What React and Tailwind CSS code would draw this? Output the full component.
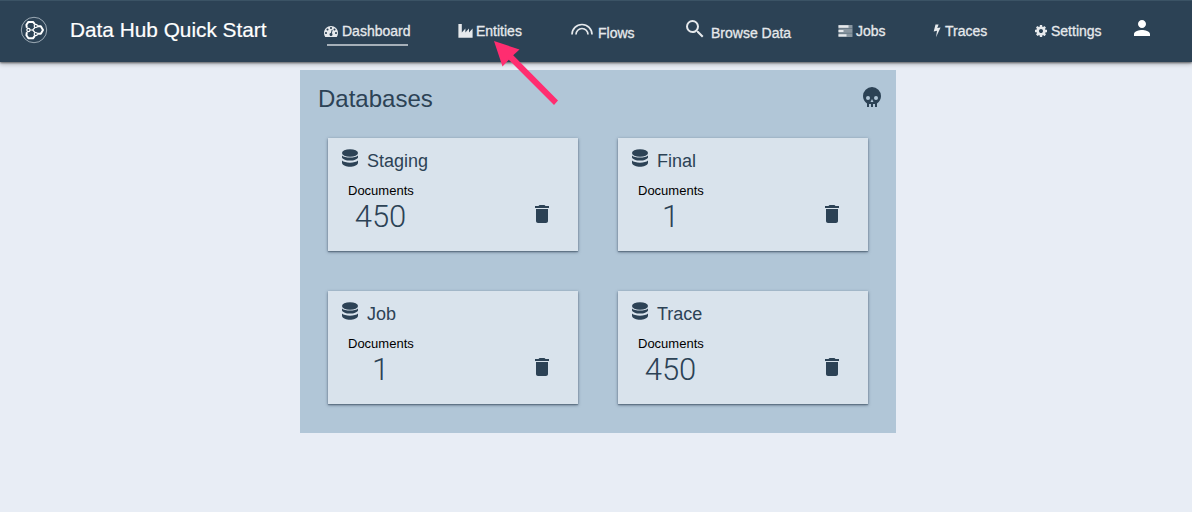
import React from "react";
import { MdDelete, MdPerson, MdSearch } from "react-icons/md";

function Logo() {
  return (
    <svg className="h-[28px] w-[28px]" viewBox="0 0 28 28" fill="none" stroke="#fff">
      <circle cx="14" cy="14" r="12.7" strokeWidth="0.8" stroke="#b9c4cd" />
      <g strokeWidth="2" strokeLinejoin="round">
        <path d="M6.9 11.8 L6.4 8.8 L8.4 5.9 H13 L14.8 8.2" />
        <path d="M6.9 16.2 L6.4 19.2 L8.4 22.3 H13 L14.8 19.8" />
        <path d="M17.6 10.3 H20.8 L23 14 L20.8 17.8 H17.6" />
      </g>
      <g strokeWidth="1.2">
        <circle cx="8.4" cy="14" r="1.6" />
        <circle cx="15.8" cy="9.9" r="1.6" />
        <circle cx="15.8" cy="18.1" r="1.6" />
        <path d="M10 14 H12.7 L14.9 11.5 M12.7 14 L14.9 16.5" />
      </g>
    </svg>
  );
}

function GaugeIcon() {
  return (
    <svg className="h-[14px] w-[14px]" viewBox="0 0 1792 1792" fill="currentColor">
      <path d="M384 1152q0-53-37.5-90.5t-90.5-37.5-90.5 37.5-37.5 90.5 37.5 90.5 90.5 37.5 90.5-37.5 37.5-90.5zm192-448q0-53-37.5-90.5t-90.5-37.5-90.5 37.5-37.5 90.5 37.5 90.5 90.5 37.5 90.5-37.5 37.5-90.5zm428 481l101-382q6-26-7.5-48.5t-38.5-29.5-48 6.5-30 39.5l-101 382q-60 5-107 43.5t-63 98.5q-20 77 20 146t117 89 146-20 89-117q16-60-6-117t-72-91zm660-33q0-53-37.5-90.5t-90.5-37.5-90.5 37.5-37.5 90.5 37.5 90.5 90.5 37.5 90.5-37.5 37.5-90.5zm-640-640q0-53-37.5-90.5t-90.5-37.5-90.5 37.5-37.5 90.5 37.5 90.5 90.5 37.5 90.5-37.5 37.5-90.5zm448 192q0-53-37.5-90.5t-90.5-37.5-90.5 37.5-37.5 90.5 37.5 90.5 90.5 37.5 90.5-37.5 37.5-90.5zm320 448q0 261-141 483-19 29-54 29h-1402q-35 0-54-29-141-221-141-483 0-182 71-348t191-286 286-191 348-71 348 71 286 191 191 286 71 348z" />
    </svg>
  );
}

function IndustryIcon() {
  return (
    <svg className="h-[14px] w-[15px]" viewBox="0 0 15 14" fill="currentColor">
      <path d="M0.4 0 H3.8 V8.4 L7.4 4.5 V8.4 L11 4.5 V8.4 L14.6 4.5 V13.8 H0.4 Z" />
    </svg>
  );
}

function ArcsIcon() {
  return (
    <svg className="h-[12px] w-[22px]" viewBox="0 0 22 12" fill="none" stroke="currentColor" strokeWidth="1.7">
      <path d="M1 11.5 A10 10 0 0 1 21 11.5" />
      <path d="M5 11.5 A6 6 0 0 1 17 11.5" />
    </svg>
  );
}

function TasksIcon() {
  return (
    <svg className="h-[12px] w-[15px]" viewBox="0 0 15 12" fill="currentColor">
      <rect x="0.5" y="0" width="14" height="12" rx="0.5" opacity="0.5" />
      <path d="M0.5 0.3h10v2.4h-10z M0.5 4.9h5v2.2h-5z M0.5 9.2h8v2.4h-8z" />
      <path d="M0.5 3.1h14v1h-14z M0.5 7.7h14v1h-14z" fill="#2c4255" opacity="0.3" />
    </svg>
  );
}

function BoltIcon() {
  return (
    <svg className="h-[14px] w-[8px]" viewBox="0 0 8 14" fill="currentColor">
      <path d="M2.5 0.5 H5.6 L4.3 4.1 L7.6 3.4 L3 13.2 L4 6.8 L0.7 7.6 Z" />
    </svg>
  );
}

function CogIcon() {
  return (
    <svg className="h-[14px] w-[14px]" viewBox="0 0 1792 1792" fill="currentColor">
      <path d="M1152 896q0-106-75-181t-181-75-181 75-75 181 75 181 181 75 181-75 75-181zm512-109v222q0 12-8 23t-20 13l-185 28q-19 54-39 91 35 50 107 138 10 12 10 25t-9 23q-27 37-99 108t-94 71q-12 0-26-9l-138-108q-44 23-91 38-16 136-29 186-7 28-36 28h-222q-14 0-24.500-8.500t-11.500-21.500l-28-184q-49-16-90-37l-141 107q-10 9-25 9-14 0-25-11-126-114-165-168-7-10-7-23 0-12 8-23 15-21 51-66.500t54-70.500q-27-50-41-99l-183-27q-13-2-21-12.500t-8-23.500v-222q0-12 8-23t19-13l186-28q14-46 39-92-40-57-107-138-10-12-10-24 0-10 9-23 26-36 98.500-107.500t94.500-71.500q13 0 26 10l138 107q44-23 91-38 16-136 29-186 7-28 36-28h222q14 0 24.500 8.500t11.500 21.500l28 184q49 16 90 37l142-107q9-9 24-9 13 0 25 10 129 119 165 170 7 8 7 22 0 12-8 23-15 21-51 66.500t-54 70.500q26 50 41 98l183 28q13 2 21 12.500t8 23.500z" />
    </svg>
  );
}

function DatabaseIcon() {
  return (
    <svg className="h-[18px] w-[16px]" viewBox="0 0 16 18" fill="currentColor">
      <ellipse cx="8" cy="4" rx="8" ry="3.8" />
      <path d="M0 6.4 C2.6 9.2 13.400 9.2 16 6.400 V8.500 C14.500 12.600 1.500 12.600 0 8.500 Z" />
      <path d="M0 11.600 C2.600 14.400 13.400 14.400 16 11.600 V13.900 C14.500 19 1.500 19 0 13.900 Z" />
    </svg>
  );
}

function SkullIcon() {
  return (
    <svg className="mt-px h-6 w-6" viewBox="0 0 24 24" fill="currentColor">
      <path d="M12,2A9,9 0 0,0 3,11C3,14.03 4.53,16.82 7,18.47V22H9V19H11V22H13V19H15V22H17V18.46C19.47,16.81 21,14 21,11A9,9 0 0,0 12,2M8,11A2,2 0 0,1 10,13A2,2 0 0,1 8,15A2,2 0 0,1 6,13A2,2 0 0,1 8,11M16,11A2,2 0 0,1 18,13A2,2 0 0,1 16,15A2,2 0 0,1 14,13A2,2 0 0,1 16,11M12,14L13.5,17H10.5L12,14Z" />
    </svg>
  );
}

function NavItem({ icon, label, className, gap = "gap-1", active = false }) {
  return (
    <a className={`flex flex-none items-start ${className}`}>
      <span className="flex flex-col">
        <span className={`flex items-center ${gap}`}>
          {icon}
          <span className="whitespace-nowrap pt-px leading-5 [-webkit-text-stroke:0.3px_#e6e9ec]">{label}</span>
        </span>
        {active && <span className="mt-[3px] mr-[3px] ml-[3px] h-[2px] bg-[#a6b0b9]" />}
      </span>
    </a>
  );
}

function DatabaseCard({ name, count }) {
  return (
    <section className="h-[113px] w-[250px] bg-[#d9e3ec] pt-[11px] shadow-[0_1px_3px_rgba(30,50,70,0.55),0_1px_1px_rgba(30,50,70,0.3)]">
      <div className="flex items-start gap-[9px] pl-[14px]">
        <DatabaseIcon />
        <h2 className="pt-[1px] text-[18px] leading-[22px]">{name}</h2>
      </div>
      <div className="flex pl-5">
        <div className="w-[65px] pt-[11px]">
          <div className="text-[13px] leading-4 text-black">Documents</div>
          <div className="pt-[1px] text-center font-[Roboto] text-[31px] leading-[34px] font-light">{count}</div>
        </div>
        <MdDelete className="mt-[30px] ml-[117px] h-6 w-6" />
      </div>
    </section>
  );
}

export default function App() {
  return (
    <div className="relative h-[512px] w-[1192px] overflow-hidden bg-[#e8edf5] font-['Liberation_Sans',sans-serif] text-[#2c4255]">
      <header className="flex h-[62px] items-start border-t border-[#3b5365] bg-[#2c4255] text-sm text-[#e6e9ec] shadow-[0_1px_2px_rgba(0,0,0,0.5),0_2px_5px_rgba(0,0,0,0.25)]">
        <div className="flex w-[324px] flex-none items-start pl-5">
          <div className="pt-[15px]">
            <Logo />
          </div>
          <h1 className="pt-[17px] pl-[22px] text-[20.8px] leading-6 whitespace-nowrap text-white [-webkit-text-stroke:0.2px_#fff]">Data Hub Quick Start</h1>
        </div>
        <nav className="flex">
          <NavItem icon={<GaugeIcon />} label="Dashboard" className="w-[134px] pt-[19px]" active />
          <NavItem icon={<IndustryIcon />} label="Entities" className="w-[113px] pt-[19px]" gap="gap-[3px]" />
          <NavItem icon={<ArcsIcon />} label="Flows" className="w-[112px] pt-[21px] [&_svg]:-mt-[7px]" gap="gap-[5px]" />
          <NavItem
            icon={<MdSearch className="-mt-2 h-6 w-6" />}
            label="Browse Data"
            className="w-[155px] pt-[21px]"
            gap="gap-[4px]"
          />
          <NavItem icon={<TasksIcon />} label="Jobs" className="w-[95px] pt-[19px]" gap="gap-[3px]" />
          <NavItem icon={<BoltIcon />} label="Traces" className="w-[101px] pt-[19px]" />
          <NavItem icon={<CogIcon />} label="Settings" className="w-[96px] pt-[19px]" gap="gap-[3px]" />
          <MdPerson className="mt-[15px] h-6 w-6 text-white" />
        </nav>
      </header>

      <main className="mt-2 ml-[300px] h-[363px] w-[596px] bg-[#b1c6d7]">
        <div className="flex h-[68px] items-start justify-between pt-[14px] pr-3 pl-[18px]">
          <h1 className="text-2xl leading-[29px]">Databases</h1>
          <SkullIcon />
        </div>
        <div className="grid grid-cols-[250px_250px] gap-x-10 gap-y-10 pl-7">
          <DatabaseCard name="Staging" count="450" />
          <DatabaseCard name="Final" count="1" />
          <DatabaseCard name="Job" count="1" />
          <DatabaseCard name="Trace" count="450" />
        </div>
      </main>

      <svg className="absolute top-[38px] left-[490px] h-[70px] w-[70px]" viewBox="490 38 70 70" fill="#ff2d70">
        <path d="M494 41 L519.500 49.500 L513.200 55.200 L558 100.500 L554 105 L508.800 59.800 L502.500 66.500 Z" />
      </svg>
    </div>
  );
}
